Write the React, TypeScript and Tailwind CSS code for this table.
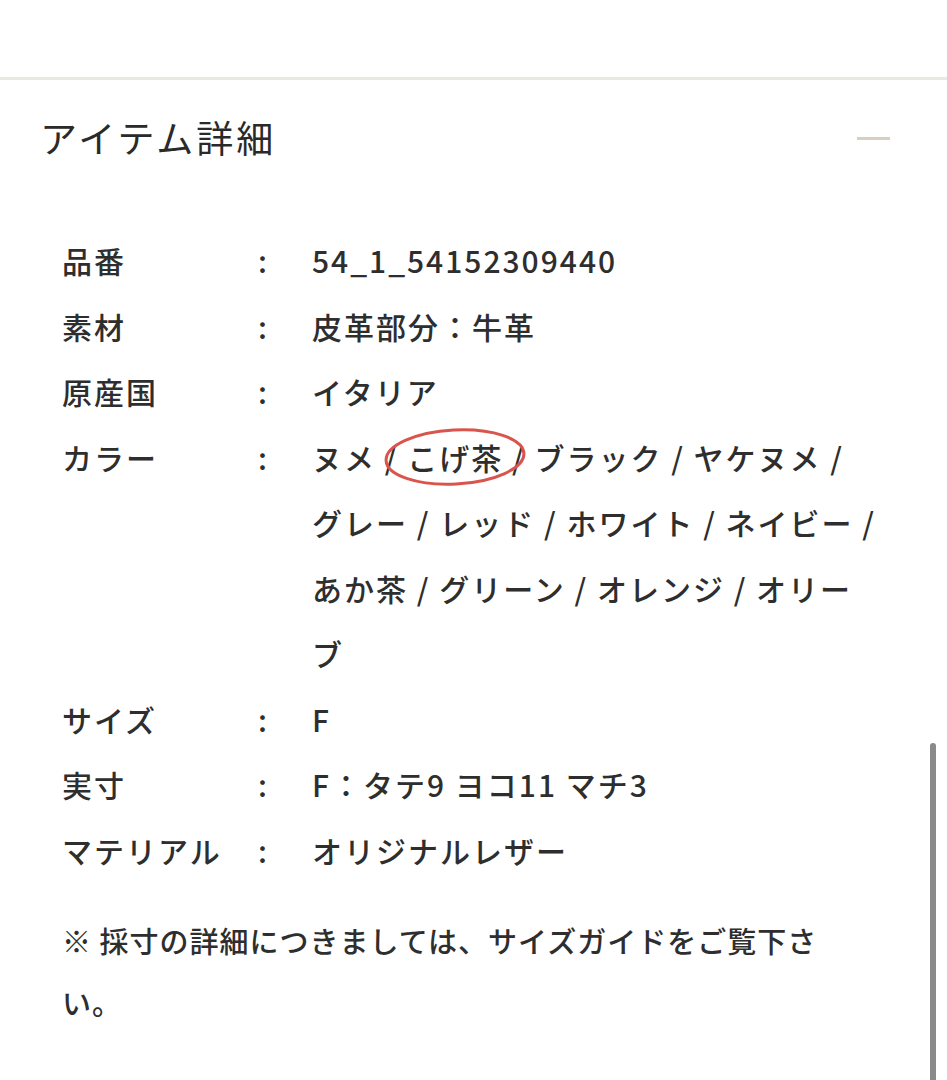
import React from 'react';

const ROWS: { label: string; value: React.ReactNode }[] = [
  { label: '品番', value: '54_1_54152309440' },
  { label: '素材', value: '皮革部分：牛革' },
  { label: '原産国', value: 'イタリア' },
  {
    label: 'カラー',
    value: (
      <>
        ヌメ /{' '}
        <span className="relative inline-block">
          こげ茶
          <svg
            className="absolute left-[-22px] top-1/2 -translate-y-1/2 w-[140px] h-[58px] overflow-visible pointer-events-none"
            viewBox="0 0 140 58"
          >
            <ellipse cx="70" cy="29" rx="69" ry="27" fill="none" stroke="#d9544c" strokeWidth="3" transform="rotate(-3 70 29)" />
          </svg>
        </span>{' '}
        / ブラック / ヤケヌメ / グレー / レッド / ホワイト / ネイビー / あか茶 / グリーン / オレンジ / オリーブ
      </>
    ),
  },
  { label: 'サイズ', value: 'F' },
  { label: '実寸', value: 'F：タテ9 ヨコ11 マチ3' },
  { label: 'マテリアル', value: 'オリジナルレザー' },
];

export default function App() {
  return (
    <div
      className="relative w-[947px] h-[1080px] overflow-hidden bg-white text-[#2e2e2e]"
      style={{ fontFamily: '"Noto Sans CJK JP", "Noto Sans", sans-serif' }}
    >
      <div className="h-[77px]" />
      <div className="border-t-[3px] border-[#ebe8e0]" />

      {/* header */}
      <div className="flex items-center justify-between h-[116px] pl-[40px] pr-[57px]">
        <h2 className="text-[37px] tracking-[3px] font-normal text-[#2a2a2a]">アイテム詳細</h2>
        <span className="block w-[33px] h-[3px] bg-[#d8cfbf]" />
      </div>

      {/* detail table */}
      <div className="mt-[32px] pl-[62px] text-[30px] tracking-[2px] leading-[65.5px] font-medium">
        {ROWS.map((row) => (
          <div key={row.label} className="flex">
            <div className="w-[196px] shrink-0">{row.label}</div>
            <div className="w-[54px] shrink-0">:</div>
            <div className="w-[568px]">{row.value}</div>
          </div>
        ))}
      </div>

      <p className="mt-[26px] pl-[62px] w-[860px] text-[29px] tracking-[1px] leading-[62px] font-medium">
        ※ 採寸の詳細につきましては、サイズガイドをご覧下さい。
      </p>

      {/* scrollbar */}
      <div className="absolute left-[930px] top-[743px] w-[6px] h-[345px] rounded-full bg-[#8a8a8a]" />
    </div>
  );
}
